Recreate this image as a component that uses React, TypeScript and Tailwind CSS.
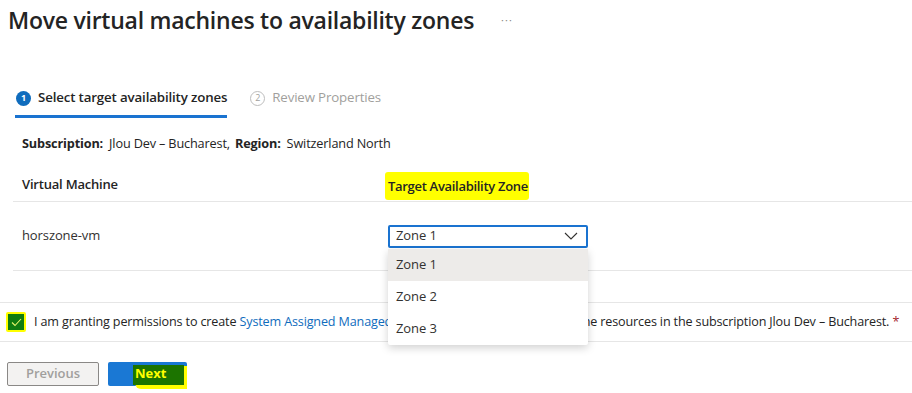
import React from "react";

const font = { fontFamily: '"Open Sans", "Noto Sans", sans-serif' };

function ChevronDown() {
  return (
    <svg width="14" height="8" viewBox="0 0 14 8" fill="none">
      <path d="M1 1l6 6 6-6" stroke="#323130" strokeWidth="1.1" />
    </svg>
  );
}

export default function App() {
  const zones = ["Zone 1", "Zone 2", "Zone 3"];

  return (
    <div
      className="w-[912px] h-[393px] bg-white text-[#323130] overflow-hidden flex flex-col"
      style={font}
    >
      {/*TITLE*/}
      <div className="flex items-center h-[40px] pl-[8px]">
        <h1 className="text-[23px] font-semibold tracking-[-0.25px] text-[#242424] leading-none">
          Move virtual machines to availability zones
        </h1>
        <span className="ml-[27px] text-[#8a8886] text-[11px] tracking-[1px]">
          ···
        </span>
      </div>

      {/*STEPS*/}
      <div className="flex items-end gap-[23px] pl-[15px] mt-[46px]">
        <div className="flex flex-col">
          <div className="flex items-center gap-[7px] h-[24px] pl-px">
            <span className="w-[15px] h-[15px] rounded-full bg-[#0f6cbd] text-white text-[9px] font-bold flex items-center justify-center">
              1
            </span>
            <span className="text-[13.3px] font-semibold text-[#242424] tracking-[-0.15px]">
              Select target availability zones
            </span>
          </div>
          <div className="h-[3px] bg-[#1a73d0] mt-[5px]" />
        </div>
        <div className="flex items-center gap-[7px] h-[24px] mb-[8px]">
          <span className="w-[15px] h-[15px] rounded-full border border-[#bdbdbd] text-[#a19f9d] text-[9px] flex items-center justify-center">
            2
          </span>
          <span className="text-[13.3px] text-[#a19f9d] tracking-[-0.15px]">
            Review Properties
          </span>
        </div>
      </div>

      {/*SUBSCRIPTION*/}
      <div className="pl-[22px] mt-[16px] text-[12.7px] text-[#242424] tracking-[-0.15px]">
        <span className="font-bold">Subscription:</span>
        <span className="ml-[6px]">Jlou Dev – Bucharest,</span>
        <span className="font-bold ml-[5px]">Region:</span>
        <span className="ml-[6px]">Switzerland North</span>
      </div>

      {/*TABLE*/}
      <div className="ml-[13px] mt-[15px]">
        <div className="flex items-center h-[34px] border-b border-[#e6e6e6]">
          <div className="w-[375px] pl-[9px] text-[13px] font-semibold text-[#242424] tracking-[-0.2px]">
            Virtual Machine
          </div>
          <div className="-ml-[3px]">
            <span className="bg-[#ffff00] pl-[3px] pr-[1px] py-[5px] rounded-[3px] text-[13px] font-semibold text-[#242424] tracking-[-0.3px]">
              Target Availability Zone
            </span>
          </div>
        </div>
        <div className="flex items-center h-[69px] border-b border-[#e6e6e6]">
          <div className="w-[375px] pl-[9px] text-[13px] text-[#323130] tracking-[-0.1px]">
            horszone-vm
          </div>
          <div className="relative">
            <div className="w-[200px] h-[23px] border-2 border-[#1a73d0] rounded-[2px] flex items-center justify-between pl-[6px] pr-[8px]">
              <span className="text-[13px] tracking-[-0.1px]">Zone 1</span>
              <ChevronDown />
            </div>
            {/*DROPDOWN MENU*/}
            <div className="absolute left-0 top-[24px] w-[200px] bg-white rounded-[2px] shadow-[0_3px_8px_rgba(0,0,0,0.18)] z-10 flex flex-col">
              {zones.map((z, i) => (
                <div
                  key={z}
                  className={
                    i === 0
                      ? "h-[32px] flex items-center pl-[8px] bg-[#edebe9] text-[13px] tracking-[-0.1px]"
                      : "h-[32px] flex items-center pl-[8px] text-[13px] tracking-[-0.1px]"
                  }
                >
                  {z}
                </div>
              ))}
            </div>
          </div>
        </div>
      </div>

      {/*PERMISSION*/}
      <div className="mt-[31px] border-t border-b border-[#e6e6e6] h-[40px] flex items-center pl-[6px]">
        <span className="w-[20px] h-[20px] bg-[#ffff00] flex items-center justify-center rounded-[2px]">
          <span className="w-[16px] h-[16px] bg-[#107c10] flex items-center justify-center">
            <svg width="11" height="9" viewBox="0 0 11 9" fill="none">
              <path d="M1 4.5l3 3L10 1" stroke="#e6f56a" strokeWidth="1.1" />
            </svg>
          </span>
        </span>
        <span className="ml-[8px] text-[12.6px] text-[#242424] tracking-[-0.15px] whitespace-nowrap">
          I am granting permissions to create{" "}
          <span className="text-[#0f6cbd]">System Assigned Managed Identity</span>
          <span className="tracking-[-0.5px]"> and assign roles to move</span>{" "}
          the resources in the subscription Jlou Dev – Bucharest.{" "}
          <span className="text-[#a4262c]">*</span>
        </span>
      </div>

      {/*BUTTONS*/}
      <div className="flex items-center gap-[9px] pl-[7px] mt-[20px]">
        <button className="w-[92px] h-[24px] bg-[#f3f2f1] border border-[#8a8886] rounded-[2px] text-[13px] font-semibold text-[#a19f9d]">
          Previous
        </button>
        <button className="relative w-[79px] h-[24px] bg-[#1a78d4] rounded-[2px] flex items-center">
          <span className="absolute left-[27px] top-[4px] w-[52px] h-[23px] bg-[#ffff00] rounded-bl-[6px]" />
          <span className="absolute left-[25px] top-[3px] w-[51px] h-[20px] bg-[#1c7400]" />
          <span className="relative ml-[27px] text-[13px] font-bold text-[#ffff00]">
            Next
          </span>
        </button>
      </div>
    </div>
  );
}
